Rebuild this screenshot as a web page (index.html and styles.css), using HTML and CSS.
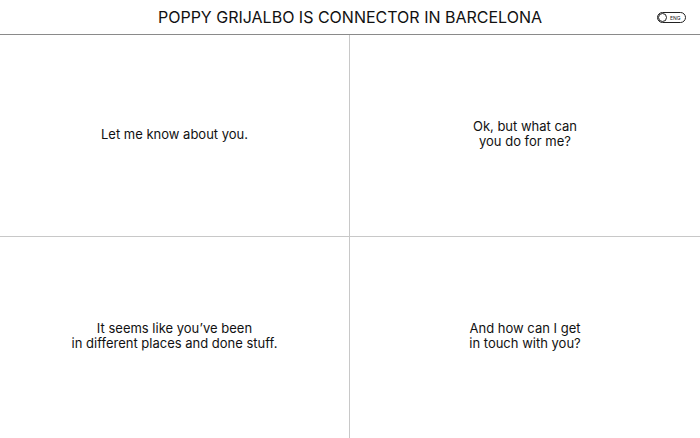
FILE: index.html
```html
<!DOCTYPE html>
<html lang="en">

<head>
    <meta charset="utf-8">
    <meta name="viewport" content="width=device-width, initial-scale=1.0">
    <title>Poppy Grijalbo</title>
    <link rel="stylesheet" href="styles.css">
</head>

<body>
    <header class="top">
        <h1 class="titel">POPPY GRIJALBO IS CONNECTOR IN BARCELONA</h1>
        <button class="sprog"><span class="knap"></span>ENG</button>
    </header>

    <main class="felter">
        <section class="felt">
            <p>Let me know about you.</p>
        </section>
        <section class="felt">
            <p>Ok, but what can<br>you do for me?</p>
        </section>
        <section class="felt">
            <p>It seems like you’ve been<br>in different places and done stuff.</p>
        </section>
        <section class="felt">
            <p>And how can I get<br>in touch with you?</p>
        </section>
    </main>
</body>

</html>
```

FILE: styles.css
```css
* {
    box-sizing: border-box;
}

body {
    margin: 0;
    height: 438px;
    font-family: Inter, "Liberation Sans", sans-serif;
    color: #111;
    background: #fff;
    display: flex;
    flex-direction: column;
}

.top {
    height: 35px;
    border-bottom: 1px solid #8a8a8a;
    display: flex;
    align-items: center;
    justify-content: center;
    position: relative;
}

.titel {
    margin: 0;
    font-size: 16px;
    font-weight: 400;
    letter-spacing: 0;
}

.sprog {
    position: absolute;
    right: 14px;
    top: 12px;
    height: 11px;
    width: 29px;
    border: 1px solid #222;
    border-radius: 6px;
    background: #fff;
    padding: 0;
    display: flex;
    align-items: center;
    font-family: inherit;
    font-size: 5px;
    color: #222;
    gap: 3px;
}

.knap {
    width: 9px;
    height: 9px;
    border: 1px solid #222;
    border-radius: 50%;
}

.felter {
    flex: 1;
    display: grid;
    grid-template-columns: 350px 1fr;
    grid-template-rows: 202px 1fr;
}

.felt {
    display: flex;
    align-items: center;
    justify-content: center;
    text-align: center;
    padding-bottom: 3px;
    border-color: #c8c8c8;
    border-style: solid;
    border-width: 0;
}

.felt:nth-child(odd) {
    border-right-width: 1px;
}

.felt:nth-child(-n+2) {
    border-bottom-width: 1px;
}

.felt p {
    margin: 0;
    font-size: 13px;
    line-height: 15px;
}
```
